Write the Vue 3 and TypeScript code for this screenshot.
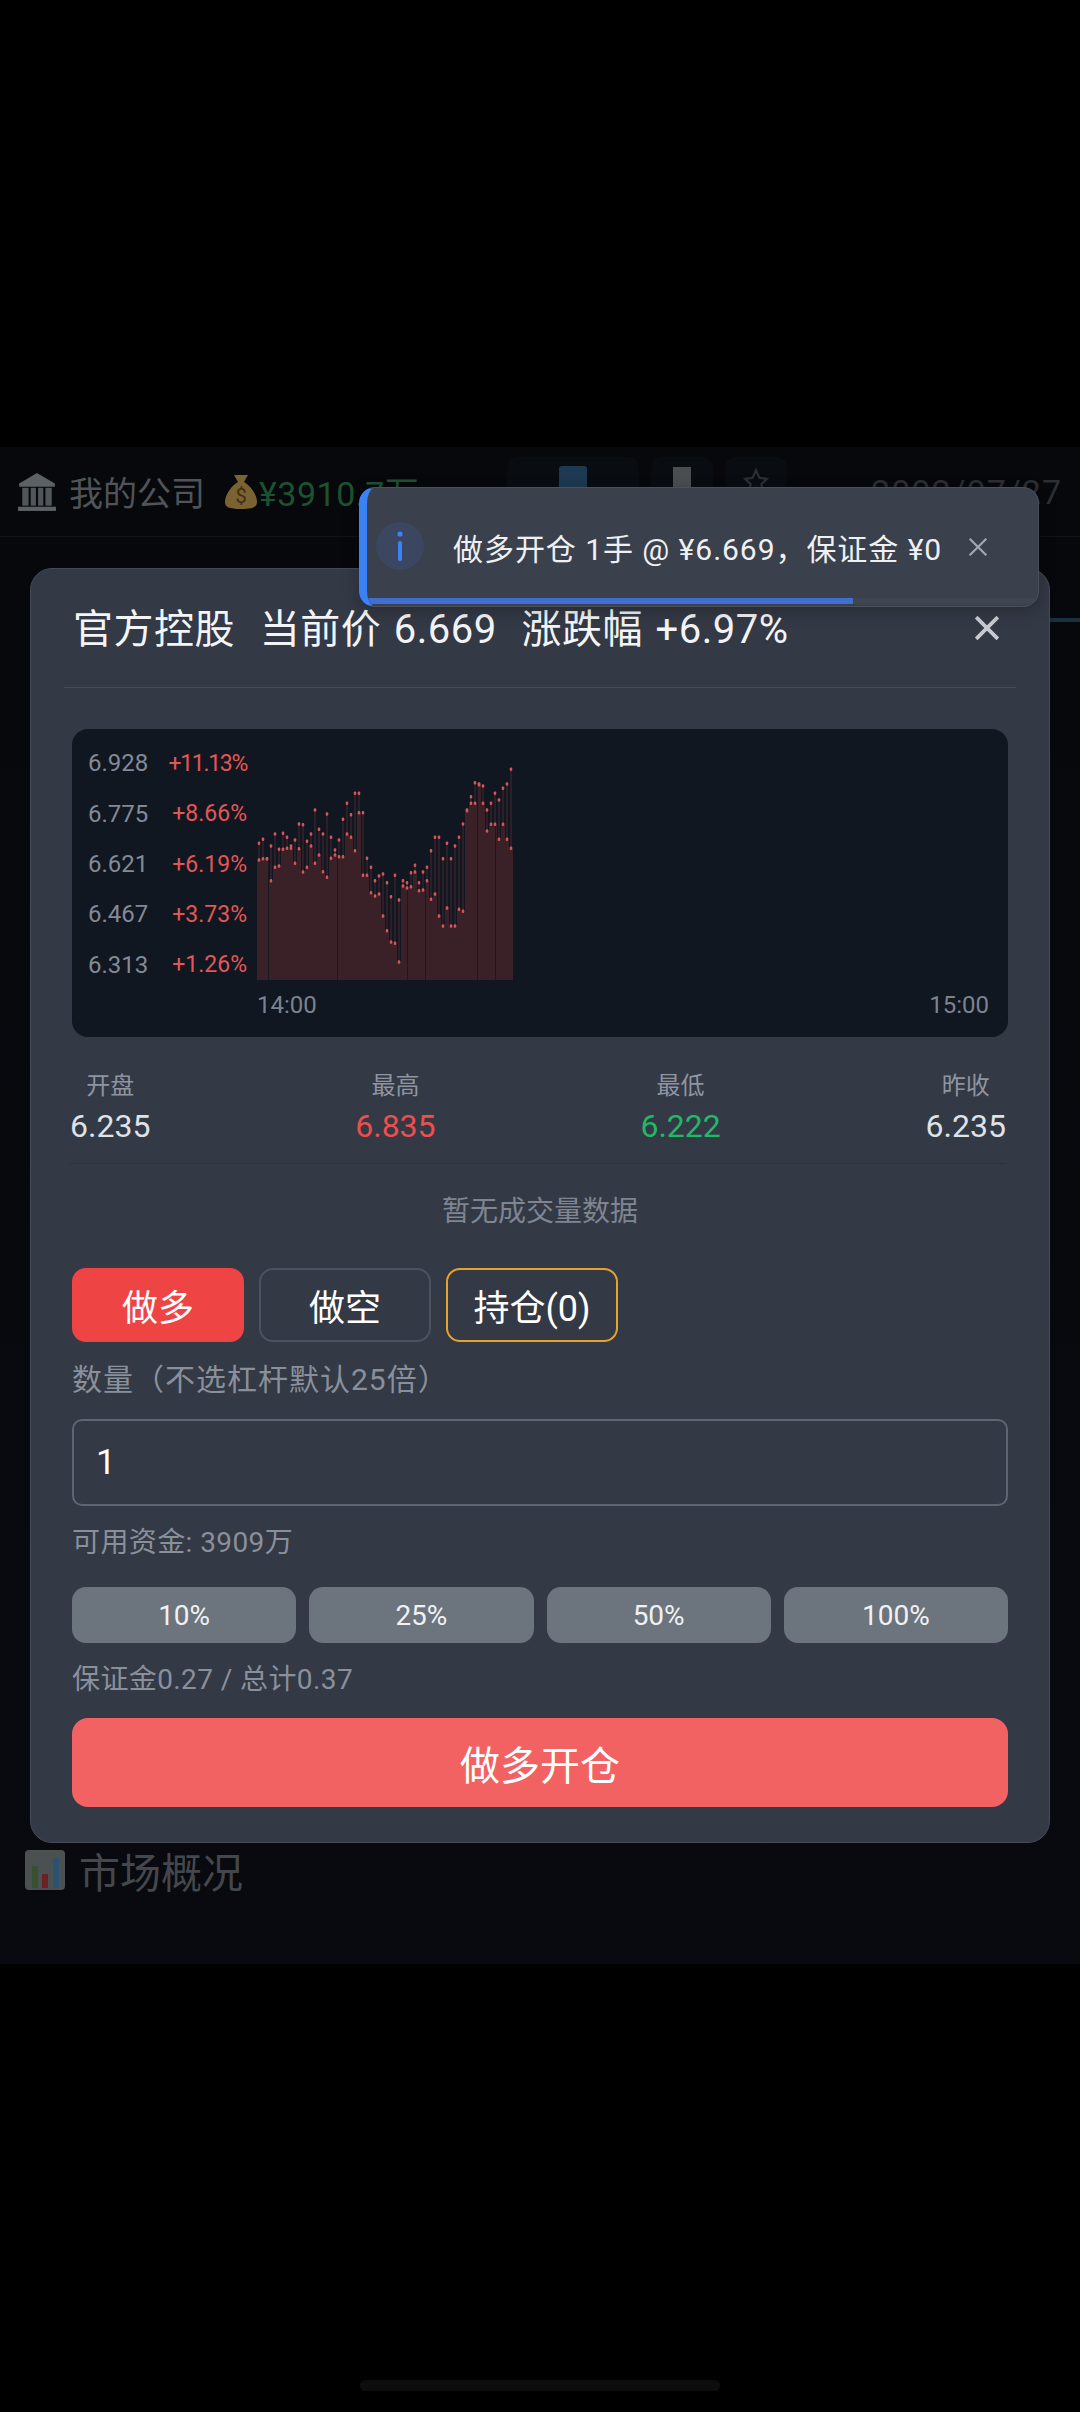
<script setup lang="ts">
interface Tick {
  price: string;
  pct: string;
}

interface Stat {
  label: string;
  value: string;
  tone?: string;
}

const ticks: Tick[] = [
  { price: '6.928', pct: '+11.13%' },
  { price: '6.775', pct: '+8.66%' },
  { price: '6.621', pct: '+6.19%' },
  { price: '6.467', pct: '+3.73%' },
  { price: '6.313', pct: '+1.26%' },
];

const stats: Stat[] = [
  { label: '开盘', value: '6.235' },
  { label: '最高', value: '6.835', tone: 'up' },
  { label: '最低', value: '6.222', tone: 'down' },
  { label: '昨收', value: '6.235' },
];

const percents = ['10%', '25%', '50%', '100%'];

// high / low of each minute, read off the reference
const raw: [number, number][] = [
  [250, 300], [238, 296], [296, 296], [258, 362], [222, 322], [268, 318], [220, 268], [232, 265],
  [258, 265], [240, 310], [192, 266], [194, 336], [244, 322], [222, 258], [150, 310], [208, 285],
  [222, 335], [162, 352], [232, 295], [270, 285], [240, 290], [178, 290], [130, 222], [164, 232],
  [100, 272], [100, 158], [158, 346], [295, 346], [322, 398], [362, 408], [348, 402], [342, 468],
  [368, 512], [410, 546], [346, 550], [420, 606], [362, 378], [368, 384], [338, 380], [316, 336],
  [368, 392], [336, 390], [322, 362], [272, 418], [232, 402], [232, 468], [296, 498], [250, 444],
  [296, 498], [258, 498], [232, 448], [192, 454], [150, 152], [110, 130], [68, 130], [72, 74],
  [78, 130], [150, 213], [130, 193], [100, 193], [120, 238], [85, 193], [72, 238], [28, 265],
];

const candles = raw.map(([high, low], i) => ({
  x: i * 4,
  high: 22 + high / 3,
  low: 22 + low / 3,
}));

// thin dark seams in the filled area
const seams = [11, 80, 150, 168, 220, 238].map((x) => ({
  x,
  top: candles[Math.floor(x / 4)].low,
}));
</script>

<template>
  <div class="screen">
    <div class="app">
      <div>
        <header class="topbar">
          <svg class="bank" viewBox="0 0 38 38">
            <path d="M19 1 36 11v3H2v-3z" fill="#5b6164" />
            <rect x="5" y="15" width="6" height="17" fill="#50565a" />
            <rect x="13" y="15" width="5" height="17" fill="#50565a" />
            <rect x="20" y="15" width="5" height="17" fill="#50565a" />
            <rect x="27" y="15" width="6" height="17" fill="#50565a" />
            <rect x="1" y="33" width="36" height="4" fill="#5b6164" />
          </svg>
          <span class="company">我的公司</span>
          <svg class="bag" viewBox="0 0 32 36">
            <path d="M9 1h14l-4 7 c7 4 13 13 13 20 0 5-4 7-16 7S0 33 0 28C0 21 6 12 13 8z" fill="#7b6231" />
            <text x="16" y="29" text-anchor="middle" class="bag-sign">$</text>
          </svg>
          <span class="cash">¥3910.7万</span>
          <div class="top-actions">
            <span class="ghost wide"><i class="play"></i></span>
            <span class="ghost"><i class="book"></i></span>
            <span class="ghost">
              <svg class="gear" viewBox="0 0 24 24">
                <path d="M12 2 15 9 22 10 17 15 18 22 12 18 6 22 7 15 2 10 9 9z" />
              </svg>
            </span>
          </div>
          <span class="date">2002/07/27</span>
        </header>
        <div class="rail"></div>
      </div>
      <div class="market">
        <svg class="market-icon" viewBox="0 0 40 40">
          <rect width="40" height="40" rx="4" fill="#4b5150" />
          <rect x="7" y="16" width="6" height="22" fill="#35512f" />
          <rect x="17" y="24" width="6" height="14" fill="#6c1f25" />
          <rect x="28" y="7" width="6" height="31" fill="#2b5270" />
        </svg>
        <span>市场概况</span>
      </div>
    </div>
    <div class="home-bar"></div>

    <section class="modal">
      <div class="modal-head">
        <h2>官方控股&nbsp; 当前价 6.669&nbsp; 涨跌幅 +6.97%</h2>
        <svg class="modal-close" viewBox="0 0 24 24">
          <path d="M2 2 22 22M22 2 2 22" />
        </svg>
      </div>
      <div class="modal-body">
        <div class="chart">
          <div class="plot-row">
            <ul class="axis">
              <li v-for="(t, i) in ticks" :key="t.price">
                <span class="axis-price">{{ t.price }}</span>
                <span class="axis-pct" :class="{ tight: i === 0 }">{{ t.pct }}</span>
              </li>
            </ul>
            <svg class="plot" width="256" height="242" viewBox="0 0 256 242">
              <g v-for="c in candles" :key="c.x">
                <rect :x="c.x" :y="c.low" width="4" :height="242 - c.low" fill="#3a2127" />
                <rect :x="c.x + 1.5" :y="c.high" width="1" :height="c.low - c.high" fill="#49282e" />
              </g>
              <rect v-for="s in seams" :key="s.x" :x="s.x" :y="s.top" width="1" :height="242 - s.top" fill="#1a1820" />
              <g v-for="c in candles" :key="'dot' + c.x">
                <rect :x="c.x + 0.75" :y="c.high - 1.75" width="2.5" height="3.5" rx="1" fill="#d5555a" />
                <rect :x="c.x + 0.75" :y="c.low - 1.75" width="2.5" height="3.5" rx="1" fill="#d5555a" />
              </g>
            </svg>
          </div>
          <div class="times">
            <span>14:00</span>
            <span>15:00</span>
          </div>
        </div>

        <div class="stats">
          <div v-for="s in stats" :key="s.label" class="stat">
            <span class="stat-label">{{ s.label }}</span>
            <span class="stat-value" :class="s.tone">{{ s.value }}</span>
          </div>
        </div>

        <p class="no-volume">暂无成交量数据</p>

        <div class="tabs">
          <button class="tab active">做多</button>
          <button class="tab">做空</button>
          <button class="tab holding">持仓(0)</button>
        </div>

        <p class="hint qty-label">数量（不选杠杆默认25倍）</p>
        <div class="qty-input">1</div>
        <p class="hint funds">可用资金: 3909万</p>

        <div class="percents">
          <button v-for="p in percents" :key="p" class="percent">{{ p }}</button>
        </div>

        <p class="hint margin">保证金0.27 / 总计0.37</p>
        <button class="submit">做多开仓</button>
      </div>
    </section>

    <aside class="toast">
      <span class="toast-icon">
        <svg viewBox="0 0 8 32" width="8" height="32">
          <circle cx="4" cy="4" r="2.6" fill="#3b82f6" />
          <rect x="2" y="11" width="4" height="20" rx="2" fill="#3b82f6" />
        </svg>
      </span>
      <span class="toast-text">做多开仓 1手 @ ¥6.669，保证金 ¥0</span>
      <svg class="toast-close" viewBox="0 0 24 24">
        <path d="M2 2 22 22M22 2 2 22" />
      </svg>
      <div class="toast-progress"><div class="toast-bar"></div></div>
    </aside>
  </div>
</template>

<style>
html,
body {
  background: #000;
}
</style>

<style scoped>
.screen {
  position: relative;
  height: 2412px;
  padding-top: 447px;
  box-sizing: border-box;
  overflow: hidden;
  background: #000;
  font-family: Roboto, "Noto Sans CJK SC", sans-serif;
}

.app {
  height: 1517px;
  display: flex;
  flex-direction: column;
  justify-content: space-between;
  background: linear-gradient(#06080b, #080a10);
}

.topbar {
  height: 90px;
  display: flex;
  align-items: center;
  padding: 0 18px 0 17px;
  box-sizing: border-box;
  border-bottom: 1px solid #0e1317;
}

.rail {
  height: 4px;
  margin-top: 81px;
  background: linear-gradient(90deg, #06080b 90%, #1b2f3e 98%);
}

.bank {
  width: 40px;
  height: 40px;
}

.company {
  margin-left: 12px;
  font-size: 34px;
  color: #505458;
}

.bag {
  margin-left: 20px;
  width: 32px;
  height: 36px;
}

.bag-sign {
  font-size: 20px;
  fill: #3c2f15;
}

.cash {
  margin-left: 2px;
  font-size: 34px;
  letter-spacing: 0.5px;
  color: #1d5231;
}

.top-actions {
  display: flex;
  gap: 12px;
  margin-left: 88px;
  margin-top: -22px;
}

.ghost {
  width: 62px;
  height: 48px;
  display: flex;
  align-items: center;
  justify-content: center;
  border-radius: 10px;
  background: #090c10;
}

.ghost.wide {
  width: 132px;
}

.play {
  width: 28px;
  height: 30px;
  background: #1d3a52;
  border-radius: 3px;
}

.book {
  width: 18px;
  height: 28px;
  background: #4a4e51;
}

.gear {
  width: 26px;
  height: 26px;
  fill: none;
  stroke: #2c3035;
  stroke-width: 2;
}

.date {
  margin-left: auto;
  font-size: 34px;
  letter-spacing: 1px;
  color: #2b2f34;
}

.market {
  display: flex;
  align-items: center;
  gap: 14px;
  padding: 0 0 64px 25px;
  font-size: 41px;
  color: #44474c;
}

.market-icon {
  width: 40px;
  height: 40px;
}

.home-bar {
  position: absolute;
  left: 360px;
  top: 2380px;
  width: 360px;
  height: 11px;
  border-radius: 6px;
  background: #0d0d0d;
}

.modal {
  position: absolute;
  left: 30px;
  top: 568px;
  width: 1020px;
  height: 1275px;
  box-sizing: border-box;
  border: 1px solid #444a56;
  border-radius: 22px;
  background: #333945;
  color: #fff;
}

.modal-head {
  height: 118px;
  margin: 0 33px;
  padding: 0 9px;
  display: flex;
  align-items: center;
  justify-content: space-between;
  border-bottom: 1px solid #464c58;
}

.modal-head h2 {
  margin: -5px 0 0;
  font-size: 40px;
  font-weight: 400;
  letter-spacing: 0.5px;
  word-spacing: 2px;
  color: #f3f4f6;
}

.modal-close {
  width: 26px;
  height: 26px;
  margin-right: 7px;
  fill: none;
  stroke: #c9cbd0;
  stroke-width: 3.4;
}

.modal-body {
  padding: 41px 41px 0;
}

.chart {
  height: 308px;
  padding: 9px 16px 0;
  box-sizing: border-box;
  border-radius: 16px;
  background: #111721;
}

.plot-row {
  height: 252px;
  display: flex;
  gap: 10px;
}

.axis {
  width: 159px;
  margin: 0;
  padding: 0;
  list-style: none;
  display: flex;
  flex-direction: column;
}

.axis li {
  flex: 1;
  display: flex;
  align-items: center;
  justify-content: space-between;
}

.axis-price {
  font-size: 24px;
  color: #838a95;
}

.axis-pct {
  font-size: 23px;
  color: #e45656;
}

.axis-pct.tight {
  letter-spacing: -1.3px;
}

.plot {
  display: block;
}

.times {
  height: 30px;
  margin-left: 169px;
  padding-right: 3px;
  display: flex;
  align-items: center;
  justify-content: space-between;
  font-size: 24px;
  color: #7c838e;
}

.stats {
  height: 127px;
  margin: 0 2px 0 -2px;
  box-sizing: border-box;
  padding-top: 31px;
  display: flex;
  justify-content: space-between;
  border-bottom: 1px solid #2c323d;
}

.stat {
  display: flex;
  flex-direction: column;
  align-items: center;
}

.stat-label {
  height: 36px;
  line-height: 36px;
  font-size: 24px;
  color: #8f95a0;
}

.stat-value {
  height: 44px;
  line-height: 44px;
  font-size: 32px;
  color: #dfe2e7;
}

.stat-value.up {
  color: #ef4e4e;
}

.stat-value.down {
  color: #22b866;
}

.no-volume {
  margin: 28px 0 0;
  line-height: 40px;
  font-size: 28px;
  text-align: center;
  color: #7f8591;
}

.tabs {
  display: flex;
  gap: 15px;
  margin-top: 36px;
}

button {
  padding: 0;
  font-family: inherit;
  color: #fff;
  border: none;
}

.tab {
  width: 172px;
  height: 74px;
  font-size: 36px;
  border: 2px solid #4b5260;
  border-radius: 14px;
  background: transparent;
}

.tab.active {
  border-color: #ef4444;
  background: #ef4444;
}

.tab.holding {
  border-color: #e5a32c;
}

.hint {
  margin: 0;
  line-height: 40px;
  font-size: 28px;
  letter-spacing: 0.4px;
  color: #8a909b;
}

.qty-label {
  margin-top: 18px;
  font-size: 30px;
  letter-spacing: 1px;
}

.qty-input {
  margin-top: 19px;
  height: 87px;
  padding-left: 22px;
  box-sizing: border-box;
  display: flex;
  align-items: center;
  font-size: 35px;
  border: 2px solid #5e6573;
  border-radius: 10px;
}

.funds {
  margin-top: 17px;
}

.percents {
  display: grid;
  grid-template-columns: repeat(4, 1fr);
  gap: 13px;
  margin-top: 24px;
}

.percent {
  height: 56px;
  font-size: 28px;
  color: #f0f1f3;
  border-radius: 14px;
  background: #6c757d;
}

.margin {
  margin-top: 17px;
}

.submit {
  display: block;
  width: 100%;
  height: 89px;
  margin-top: 18px;
  font-size: 40px;
  border-radius: 16px;
  background: #f26262;
}

.toast {
  position: absolute;
  left: 359px;
  top: 487px;
  width: 680px;
  height: 120px;
  box-sizing: border-box;
  display: flex;
  align-items: center;
  padding: 0 0 0 9px;
  overflow: hidden;
  border: 1px solid #4a505c;
  border-left: 8px solid #3b82f6;
  border-radius: 16px;
  background: #3a404c;
  box-shadow: 0 4px 16px rgba(0, 0, 0, 0.25);
}

.toast-icon {
  width: 48px;
  height: 48px;
  margin-top: -2px;
  display: flex;
  align-items: center;
  justify-content: center;
  border-radius: 50%;
  background: #3b4660;
}

.toast-text {
  margin-left: 29px;
  font-size: 30px;
  letter-spacing: 0.95px;
  white-space: nowrap;
  color: #eef0f3;
}

.toast-close {
  width: 20px;
  height: 20px;
  margin-left: 26px;
  fill: none;
  stroke: #a3a7af;
  stroke-width: 2.6;
}

.toast-progress {
  position: absolute;
  left: 0;
  right: 0;
  bottom: 2px;
  height: 6px;
  background: #40464f;
}

.toast-bar {
  width: 72.5%;
  height: 100%;
  background: #3f6fd0;
}
</style>
